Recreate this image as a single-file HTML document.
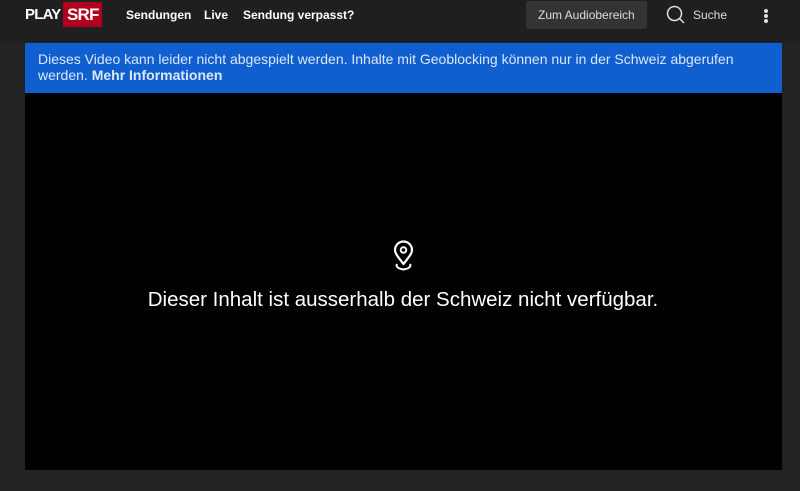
<!DOCTYPE html>
<html><head><style>
body{margin:0;width:800px;height:491px;background:#222;font-family:"Liberation Sans",sans-serif;overflow:hidden;position:relative;color:#fff}
.hdr{position:absolute;left:0;top:0;width:800px;height:42px;background:#1f1f1f}
.a{position:absolute;white-space:nowrap}
</style></head><body>
<div class="hdr"></div>
<div class="a" style="left:25px;top:7px;font-size:15px;font-weight:bold;letter-spacing:-0.8px;line-height:16px">PLAY</div>
<div class="a" style="left:63px;top:2px;width:39px;height:25px;background:#b1001d"></div>
<div class="a" style="left:67px;top:5px;font-size:17px;font-weight:bold;line-height:20px;letter-spacing:-0.8px">SRF</div>
<div class="a" style="left:126px;top:8px;font-size:12px;font-weight:bold">Sendungen</div>
<div class="a" style="left:204px;top:8px;font-size:12px;font-weight:bold">Live</div>
<div class="a" style="left:243px;top:8px;font-size:12px;font-weight:bold">Sendung verpasst?</div>
<div class="a" style="left:526px;top:1px;width:121px;height:28px;background:#333;border-radius:2px"></div>
<div class="a" style="left:538px;top:8px;font-size:12px;color:#ddd">Zum Audiobereich</div>
<svg class="a" style="left:665px;top:4px" width="22" height="22" viewBox="0 0 22 22"><circle cx="9.5" cy="9.5" r="7" fill="none" stroke="#ddd" stroke-width="1.5"/><line x1="14.5" y1="14.5" x2="19" y2="19" stroke="#ddd" stroke-width="1.5"/></svg>
<div class="a" style="left:693px;top:8px;font-size:12px;color:#ddd">Suche</div>
<div class="a" style="left:764px;top:9px;width:4px;height:4px;border-radius:2px;background:#ddd;box-shadow:0 5px #ddd,0 10px #ddd"></div>
<div class="a" style="left:25px;top:43px;width:757px;height:50px;background:#0f5fd0"></div>
<div class="a" style="left:38px;top:51px;font-size:14px;line-height:16px;color:#dde6f5">Dieses Video kann leider nicht abgespielt werden. Inhalte mit Geoblocking können nur in der Schweiz abgerufen<br>werden. <b>Mehr Informationen</b></div>
<div class="a" style="left:25px;top:93px;width:757px;height:377px;background:#000"></div>
<svg class="a" style="left:391px;top:240px" width="25" height="33" viewBox="0 0 25 33"><path d="M12.5 24 C8 18 4 14 4 10 A8.5 8.5 0 0 1 21 10 C21 14 17 18 12.5 24Z" fill="none" stroke="#fff" stroke-width="2.2" stroke-linejoin="round"/><circle cx="12.5" cy="10" r="2.8" fill="none" stroke="#fff" stroke-width="2"/><path d="M6 24 Q4 28 12.5 29.5 Q21 28 19 24" fill="none" stroke="#fff" stroke-width="2"/></svg>
<div class="a" style="left:0;width:806px;text-align:center;top:288px;font-size:20.5px">Dieser Inhalt ist ausserhalb der Schweiz nicht verfügbar.</div>
</body></html>
